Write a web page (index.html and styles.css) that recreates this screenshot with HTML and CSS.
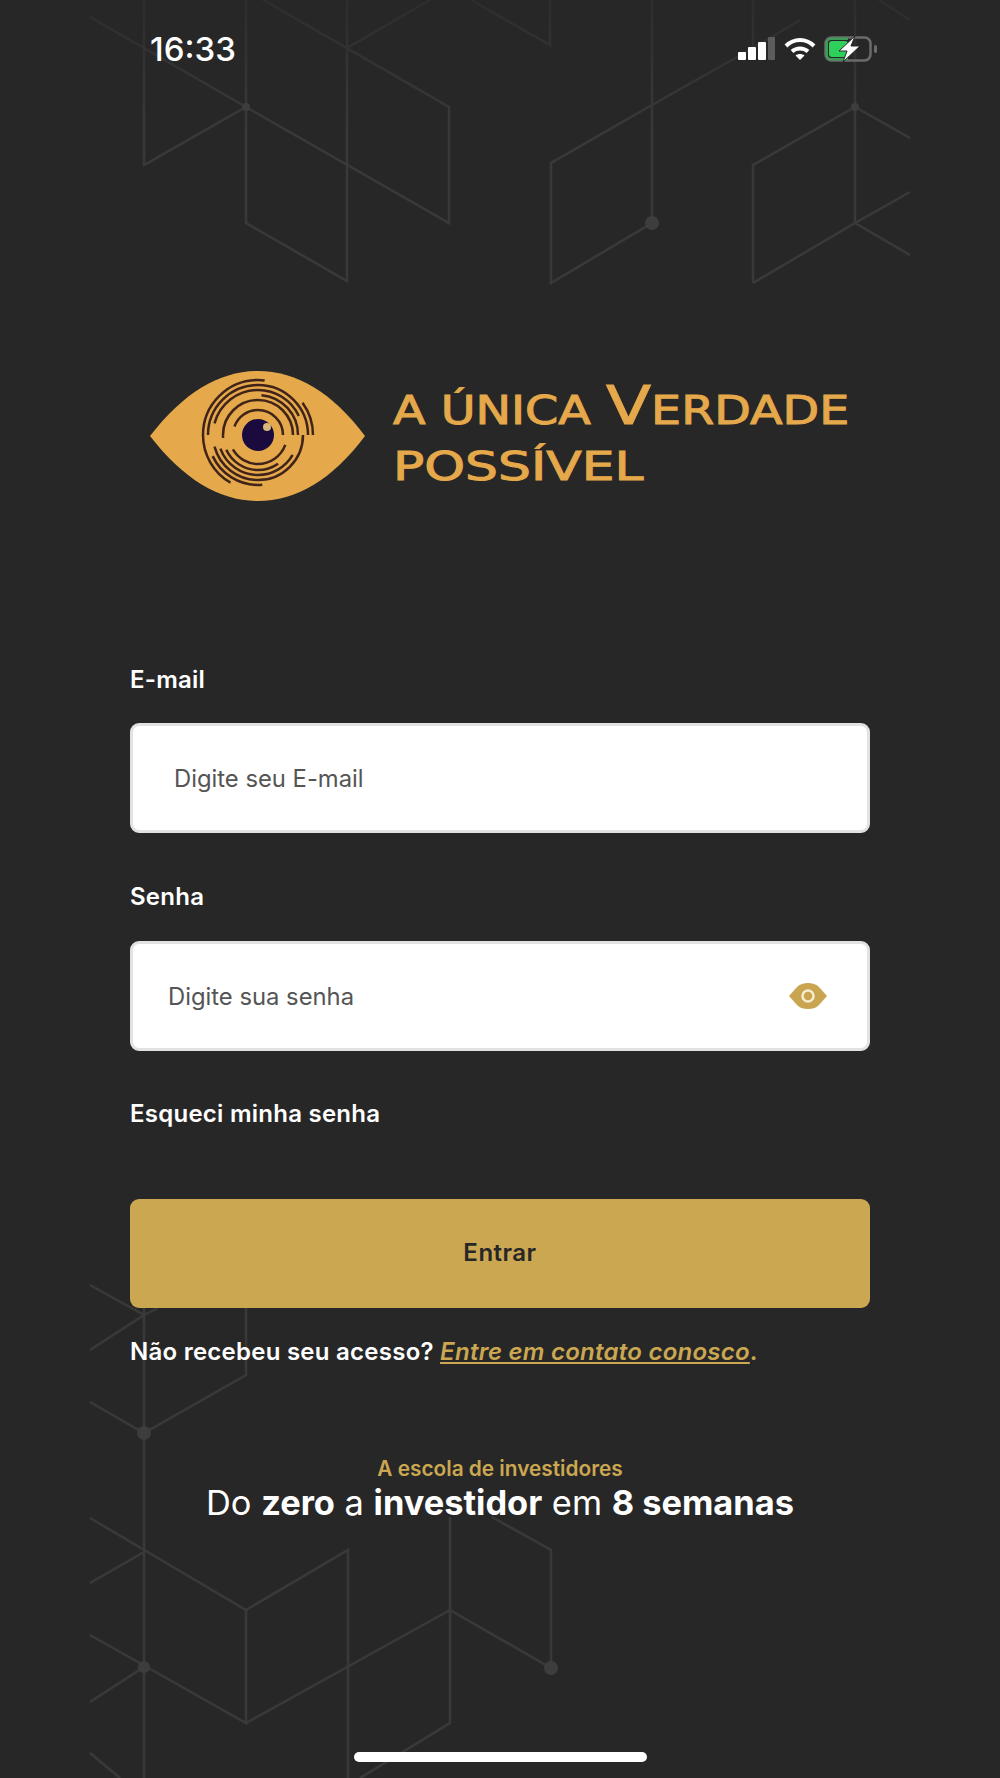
FILE: index.html
```html
<!DOCTYPE html>
<html lang="pt-BR">
<head>
  <meta charset="utf-8">
  <title>A Única Verdade Possível</title>
  <link rel="stylesheet" href="styles.css">
</head>
<body>
  <div class="screen">
    <!-- hexagon pattern behind everything, it fades out at the top -->
    <svg class="pattern" width="1000" height="1778" viewBox="0 0 1000 1778" fill="none">
      <defs>
        <linearGradient id="pattern-fade" gradientUnits="userSpaceOnUse" x1="0" y1="0" x2="0" y2="130">
          <stop offset="0" stop-color="#2d2d2d"/>
          <stop offset="1" stop-color="#393939"/>
        </linearGradient>
      </defs>
      <g stroke="url(#pattern-fade)" stroke-width="2.500">
        <path d="M144 0V165L246 107V223L347 281V0"/>
        <path d="M246 0V107L449 223V107L246 -10"/>
        <path d="M90 17L144 48L246 107"/>
        <path d="M347 48L430 0"/>
        <path d="M471 0L550 45V0"/>
        <path d="M652 0V223L551 283V163L652 105L753 48L800 20"/>
        <path d="M753 0V48M753 283V165L855 107L910 138"/>
        <path d="M753 283L855 223L910 192M855 223L910 255M855 0V223"/>
        <path d="M879 0L910 20"/>
        <path d="M90 1285L144 1315M90 1350L144 1315L158 1308"/>
        <path d="M144 1308V1778"/>
        <path d="M246 1308V1375L144 1433L90 1402"/>
        <path d="M90 1518L246 1610L348 1550V1778"/>
        <path d="M90 1583L144 1552"/>
        <path d="M246 1610V1723L90 1635"/>
        <path d="M90 1702L144 1667"/>
        <path d="M246 1723L450 1610V1723L360 1778"/>
        <path d="M450 1517V1610L551 1668V1550L492 1517"/>
        <path d="M90 1753L120 1778"/>
      </g>
      <g class="pattern-dots">
        <circle cx="652" cy="223" r="7"/>
        <circle cx="144" cy="1433" r="7"/>
        <circle cx="144" cy="1667" r="6"/>
        <circle cx="551" cy="1668" r="7"/>
        <circle cx="246" cy="107" r="4"/>
        <circle cx="855" cy="107" r="4"/>
      </g>
    </svg>

    <div class="status-bar">
      <span class="clock">16:33</span>
      <div class="status-icons">
        <svg class="signal" width="38" height="24" viewBox="0 0 38 24">
          <rect x="0" y="15" width="8" height="8" rx="1" fill="#fff"/>
          <rect x="10" y="10" width="8" height="13" rx="1" fill="#fff"/>
          <rect x="20" y="5" width="8" height="18" rx="1" fill="#fff"/>
          <rect x="30" y="0" width="7" height="23" rx="1" fill="#5c5c5c"/>
        </svg>
        <svg class="wifi" width="32" height="24" viewBox="0 0 32 24" fill="none" stroke="#fff" stroke-width="4">
          <path d="M2 9C10 1 22 1 30 9"/>
          <path d="M8 14.500C12.500 10.500 19.500 10.500 24 14.500"/>
          <path d="M16 23L11.500 18.500C14 16.500 18 16.500 20.500 18.500Z" fill="#fff" stroke="none"/>
        </svg>
        <svg class="battery" width="54" height="26" viewBox="0 0 54 26">
          <rect x="1.500" y="1.500" width="45" height="23" rx="6" fill="none" stroke="#6b6b6b" stroke-width="2.500"/>
          <rect x="5" y="5" width="19" height="16" rx="3" fill="#2fcf5c"/>
          <path d="M1.500 7.500A6 6 0 0 1 7.500 1.500H24V4H7A3 3 0 0 0 4 7V19A3 3 0 0 0 7 22H24V24.500H7.500A6 6 0 0 1 1.500 18.500Z" fill="#3f9c58"/>
          <path d="M31 0L15 15H23L19 26L36 10H27Z" fill="#fff" stroke="#272727" stroke-width="1"/>
          <rect x="50" y="9" width="3" height="8" rx="1.500" fill="#6b6b6b"/>
        </svg>
      </div>
    </div>

    <div class="logo">
      <svg class="logo-eye" width="216" height="132" viewBox="0 0 216 132" fill="none">
        <path d="M0 66C34 22 70 1 108 1C146 1 182 22 215 66C182 110 146 131 108 131C70 131 34 110 0 66Z" fill="#e5a84a"/>
        <!-- pathLength 360: dash lengths and offsets read as degrees, clockwise from 3 o'clock -->
        <g stroke="#40241a" stroke-width="2.500" fill="none">
          <circle cx="108" cy="65" r="55" pathLength="360" stroke-dasharray="150 360" stroke-dashoffset="-324"/>
          <circle cx="108" cy="65" r="55" pathLength="360" stroke-dasharray="157 360" stroke-dashoffset="-120"/>
          <circle cx="108" cy="65" r="50" pathLength="360" stroke-dasharray="225 360" stroke-dashoffset="-180"/>
          <circle cx="108" cy="65" r="50" pathLength="360" stroke-dasharray="70 360" stroke-dashoffset="-85"/>
          <circle cx="108" cy="65" r="45" pathLength="360" stroke-dasharray="165 360"/>
          <circle cx="108" cy="65" r="45" pathLength="360" stroke-dasharray="140 360" stroke-dashoffset="-195"/>
          <circle cx="108" cy="65" r="40" pathLength="360" stroke-dasharray="130 360" stroke-dashoffset="-30"/>
          <circle cx="108" cy="65" r="40" pathLength="360" stroke-dasharray="90 360" stroke-dashoffset="-275"/>
          <circle cx="108" cy="65" r="35" pathLength="360" stroke-dasharray="230 360" stroke-dashoffset="-175"/>
          <circle cx="108" cy="65" r="35" pathLength="360" stroke-dasharray="100 360" stroke-dashoffset="-55"/>
          <circle cx="108" cy="65" r="29" pathLength="360" stroke-dasharray="130 360" stroke-dashoffset="-20"/>
          <circle cx="108" cy="65" r="25" pathLength="360" stroke-dasharray="300 360" stroke-dashoffset="-200"/>
        </g>
        <circle cx="108" cy="65" r="16" fill="#1a0a3e"/>
        <circle cx="117" cy="57" r="4" fill="#d9b67a"/>
      </svg>
      <div class="logo-text">
        <span class="logo-line logo-line-first">A ÚNICA <span class="logo-big">V</span>ERDADE</span>
        <span class="logo-line logo-line-second">POSSÍVEL</span>
      </div>
    </div>

    <form class="login-form">
      <label class="field-label">E-mail</label>
      <div class="text-input email-input">Digite seu E-mail</div>

      <label class="field-label">Senha</label>
      <div class="text-input password-input">
        <span>Digite sua senha</span>
        <svg class="eye-toggle" width="38" height="26" viewBox="0 0 38 26">
          <path d="M0 13L8 4C11 1 15 0 19 0C23 0 27 1 30 4L38 13L30 22C27 25 23 26 19 26C15 26 11 25 8 22Z" fill="#c9a552"/>
          <circle cx="19" cy="13" r="5.500" fill="none" stroke="#f6ecd0" stroke-width="2.500"/>
        </svg>
      </div>

      <a class="forgot-link">Esqueci minha senha</a>
      <button class="submit-button" type="button">Entrar</button>
      <p class="access-note">Não recebeu seu acesso? <a class="contact-link">Entre em contato conosco</a><span class="contact-dot">.</span></p>
    </form>

    <div class="tagline">
      <p class="tagline-top">A escola de investidores</p>
      <p class="tagline-main">Do <strong>zero</strong> a <strong>investidor</strong> em <strong>8 semanas</strong></p>
    </div>

    <div class="home-bar"></div>
  </div>
</body>
</html>
```

FILE: styles.css
```css
body {
  margin: 0;
  background: #272727;
  font-family: Inter, "Liberation Sans", sans-serif;
}
p {
  margin: 0;
}
.screen {
  position: relative;
  width: 1000px;
  height: 1778px;
  overflow: hidden;
  background: #272727;
}
.pattern {
  position: absolute;
  top: 0;
  left: 0;
}
.pattern-dots circle {
  fill: #3d3d3d;
}

/* status bar */
.status-bar {
  position: relative;
  display: flex;
  justify-content: space-between;
  align-items: center;
  height: 98px;
  padding: 0 122px 0 150px;
}
.clock {
  color: #fff;
  font-size: 33px;
  font-weight: 500;
}
.status-icons {
  display: flex;
  align-items: center;
  gap: 8px;
}

/* logo */
.logo {
  position: relative;
  display: flex;
  align-items: center;
  gap: 27px;
  margin: 272px 0 0 150px;
}
.logo-eye {
  flex: none;
}
.logo-text {
  display: flex;
  flex-direction: column;
  gap: 14px;
}
.logo-line {
  color: #e5a84a;
  font-family: "DejaVu Sans", sans-serif;
  font-size: 39px;
  line-height: 42px;
  white-space: nowrap;
  transform-origin: left center;
  -webkit-text-stroke: 1px #e5a84a;
}
.logo-line-first {
  transform: scaleX(1.22);
}
.logo-line-second {
  transform: scaleX(1.33);
}
.logo-big {
  font-size: 54px;
  line-height: 42px;
}

/* form */
.login-form {
  position: relative;
  display: flex;
  flex-direction: column;
  margin: 164px 130px 0;
}
.field-label,
.forgot-link {
  color: #fff;
  font-size: 24px;
  font-weight: 600;
  letter-spacing: 0.25px;
  line-height: 28px;
}
.text-input {
  display: flex;
  align-items: center;
  justify-content: space-between;
  box-sizing: border-box;
  height: 110px;
  margin: 30px 0 49px;
  background: #fff;
  border: 3px solid #e2e2e2;
  border-radius: 9px;
  color: #555;
  font-size: 23.800px;
}
.email-input {
  margin: 29px 0 50px;
  padding-left: 41px;
}
.password-input {
  padding: 0 40px 0 35px;
}
.submit-button {
  height: 109px;
  margin-top: 71px;
  padding: 0 0 2px;
  border: 0;
  border-radius: 9px;
  background: #cba752;
  color: #272727;
  font-family: inherit;
  font-size: 24px;
  font-weight: 600;
  letter-spacing: 0.500px;
}
.access-note {
  margin-top: 30px;
  color: #fff;
  font-size: 24px;
  font-weight: 600;
  letter-spacing: 0.25px;
  line-height: 28px;
}
.contact-link {
  color: #cba752;
  font-style: italic;
  text-decoration: underline;
}
.contact-dot {
  color: #cba752;
}

/* tagline */
.tagline {
  position: relative;
  margin-top: 91px;
  text-align: center;
}
.tagline-top {
  color: #cba752;
  font-size: 20.800px;
  font-weight: 600;
  line-height: 24px;
}
.tagline-main {
  color: #fff;
  font-size: 34.400px;
  font-weight: 400;
  line-height: 44px;
}
.tagline-main strong {
  font-weight: 700;
}

.home-bar {
  position: absolute;
  left: 354px;
  bottom: 16px;
  width: 293px;
  height: 10px;
  border-radius: 5px;
  background: #fff;
}
```
